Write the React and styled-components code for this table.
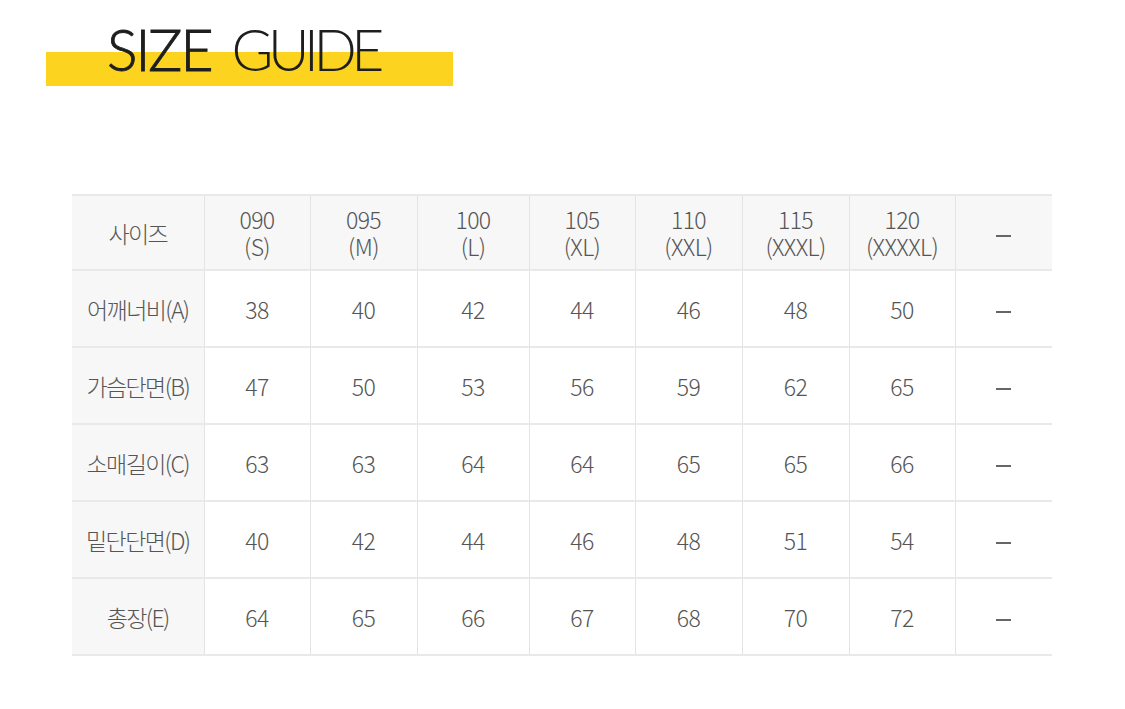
import React from "react";
import styled, { createGlobalStyle } from "styled-components";

const Global = createGlobalStyle`
  html, body { margin: 0; padding: 0; background: #fff; }
  body { font-family: "Noto Sans CJK KR", "Noto Sans", sans-serif; }
`;

const Page = styled.div`
  width: 1125px;
  height: 709px;
  background: #fff;
  overflow: hidden;
`;

const TitleBand = styled.div`
  margin-left: 46px;
  width: 407px;
  height: 86px;
  background: linear-gradient(to bottom, transparent 52px, #fcd420 52px, #fcd420 86px);
  display: flex;
  align-items: flex-end;
  padding-left: 61px;
  box-sizing: border-box;
`;

const Title = styled.h1`
  margin: 0 0 8px 0;
  font-family: "Lato", "Liberation Sans", sans-serif;
  font-size: 57px;
  line-height: 57px;
  color: #1e1e1e;
  font-weight: 300;
  white-space: nowrap;
`;

const Word = styled.span`
  font-weight: 300;
  letter-spacing: ${(p) => (p.$light ? "-5.4px" : "-2px")};
  -webkit-text-stroke: ${(p) => (p.$light ? "0" : "0.9px #1e1e1e")};
  margin-left: ${(p) => (p.$gap ? "20px" : "0")};
`;

const TableWrap = styled.div`
  margin: 108px 0 0 72px;
  width: 980px;
`;

const Table = styled.table`
  width: 980px;
  border-collapse: collapse;
  table-layout: fixed;
  border-top: 2px solid #e9e9e9;
  border-bottom: 2px solid #e9e9e9;
`;

const Row = styled.tr`
  height: ${(p) => (p.$head ? "75px" : "77px")};
  background: ${(p) => (p.$head ? "#f7f7f7" : "#fff")};
  & + & { border-top: 2px solid #e9e9e9; }
`;

const Cell = styled.td`
  padding: 0;
  text-align: center;
  vertical-align: middle;
  font-size: 23px;
  line-height: 28px;
  font-weight: 300;
  letter-spacing: ${(p) => (p.$label ? "-1.6px" : "-0.6px")};
  color: #555;
  background: ${(p) => (p.$label ? "#f7f7f7" : "inherit")};
  border-left: ${(p) => (p.$first ? "none" : "1px solid #e4e4e4")};
`;

const Line = styled.span`
  display: block;
  line-height: 27px;
`;

const Dash = styled.span`
  display: inline-block;
  width: 15px;
  height: 2px;
  background: #666;
  vertical-align: middle;
`;

const widths = [132, 106, 107, 112, 106, 107, 107, 106, 97];

const head = [
  ["090", "(S)"],
  ["095", "(M)"],
  ["100", "(L)"],
  ["105", "(XL)"],
  ["110", "(XXL)"],
  ["115", "(XXXL)"],
  ["120", "(XXXXL)"],
];

const rows = [
  ["어깨너비(A)", [38, 40, 42, 44, 46, 48, 50]],
  ["가슴단면(B)", [47, 50, 53, 56, 59, 62, 65]],
  ["소매길이(C)", [63, 63, 64, 64, 65, 65, 66]],
  ["밑단단면(D)", [40, 42, 44, 46, 48, 51, 54]],
  ["총장(E)", [64, 65, 66, 67, 68, 70, 72]],
];

export default function App() {
  return (
    <Page>
      <Global />
      <TitleBand>
        <Title>
          <Word>SIZE</Word>
          <Word $light $gap>GUIDE</Word>
        </Title>
      </TitleBand>
      <TableWrap>
        <Table>
          <colgroup>
            {widths.map((w, i) => (
              <col key={i} style={{ width: w }} />
            ))}
          </colgroup>
          <tbody>
            <Row $head>
              <Cell $first $label>사이즈</Cell>
              {head.map(([a, b]) => (
                <Cell key={a}>
                  <Line>{a}</Line>
                  <Line>{b}</Line>
                </Cell>
              ))}
              <Cell><Dash aria-label="–" /></Cell>
            </Row>
            {rows.map(([label, vals]) => (
              <Row key={label}>
                <Cell $first $label>{label}</Cell>
                {vals.map((v, i) => (
                  <Cell key={i}>{v}</Cell>
                ))}
                <Cell><Dash aria-label="–" /></Cell>
              </Row>
            ))}
          </tbody>
        </Table>
      </TableWrap>
    </Page>
  );
}
